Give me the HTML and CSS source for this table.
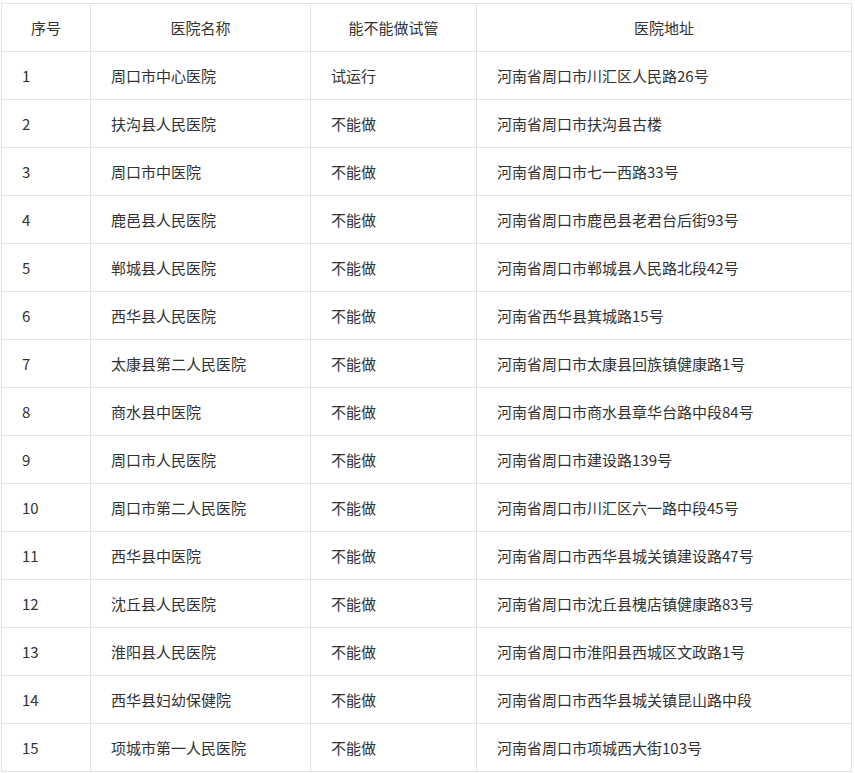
FILE: index.html
```html
<!DOCTYPE html>
<html lang="zh-CN">
<head>
<meta charset="utf-8">
<title>周口市医院</title>
<link rel="stylesheet" href="styles.css">
</head>
<body>
<table class="hosp">
<colgroup>
<col class="c1"><col class="c2"><col class="c3"><col class="c4">
</colgroup>
<thead>
<tr><th>序号</th><th>医院名称</th><th>能不能做试管</th><th>医院地址</th></tr>
</thead>
<tbody>
<tr><td>1</td><td>周口市中心医院</td><td>试运行</td><td>河南省周口市川汇区人民路26号</td></tr>
<tr><td>2</td><td>扶沟县人民医院</td><td>不能做</td><td>河南省周口市扶沟县古楼</td></tr>
<tr><td>3</td><td>周口市中医院</td><td>不能做</td><td>河南省周口市七一西路33号</td></tr>
<tr><td>4</td><td>鹿邑县人民医院</td><td>不能做</td><td>河南省周口市鹿邑县老君台后街93号</td></tr>
<tr><td>5</td><td>郸城县人民医院</td><td>不能做</td><td>河南省周口市郸城县人民路北段42号</td></tr>
<tr><td>6</td><td>西华县人民医院</td><td>不能做</td><td>河南省西华县箕城路15号</td></tr>
<tr><td>7</td><td>太康县第二人民医院</td><td>不能做</td><td>河南省周口市太康县回族镇健康路1号</td></tr>
<tr><td>8</td><td>商水县中医院</td><td>不能做</td><td>河南省周口市商水县章华台路中段84号</td></tr>
<tr><td>9</td><td>周口市人民医院</td><td>不能做</td><td>河南省周口市建设路139号</td></tr>
<tr><td>10</td><td>周口市第二人民医院</td><td>不能做</td><td>河南省周口市川汇区六一路中段45号</td></tr>
<tr><td>11</td><td>西华县中医院</td><td>不能做</td><td>河南省周口市西华县城关镇建设路47号</td></tr>
<tr><td>12</td><td>沈丘县人民医院</td><td>不能做</td><td>河南省周口市沈丘县槐店镇健康路83号</td></tr>
<tr><td>13</td><td>淮阳县人民医院</td><td>不能做</td><td>河南省周口市淮阳县西城区文政路1号</td></tr>
<tr><td>14</td><td>西华县妇幼保健院</td><td>不能做</td><td>河南省周口市西华县城关镇昆山路中段</td></tr>
<tr><td>15</td><td>项城市第一人民医院</td><td>不能做</td><td>河南省周口市项城西大街103号</td></tr>
</tbody>
</table>
</body>
</html>
```

FILE: styles.css
```css
html, body {
  margin: 0;
  padding: 0;
  background: #fff;
}
body {
  padding: 3px 0 0 1px;
  font-family: "Noto Sans CJK SC", "Microsoft YaHei", sans-serif;
  font-size: 15px;
  color: #333;
}
.hosp {
  border-collapse: collapse;
  table-layout: fixed;
  width: 850px;
}
.c1 { width: 89px; }
.c2 { width: 220px; }
.c3 { width: 166px; }
.c4 { width: 375px; }
.hosp th, .hosp td {
  border: 1px solid #e3e3e3;
  height: 48px;
  padding: 0 20px;
  box-sizing: border-box;
  vertical-align: middle;
  white-space: nowrap;
  font-weight: normal;
  line-height: 20px;
}
.hosp th {
  text-align: center;
}
.hosp td {
  text-align: left;
}
```
